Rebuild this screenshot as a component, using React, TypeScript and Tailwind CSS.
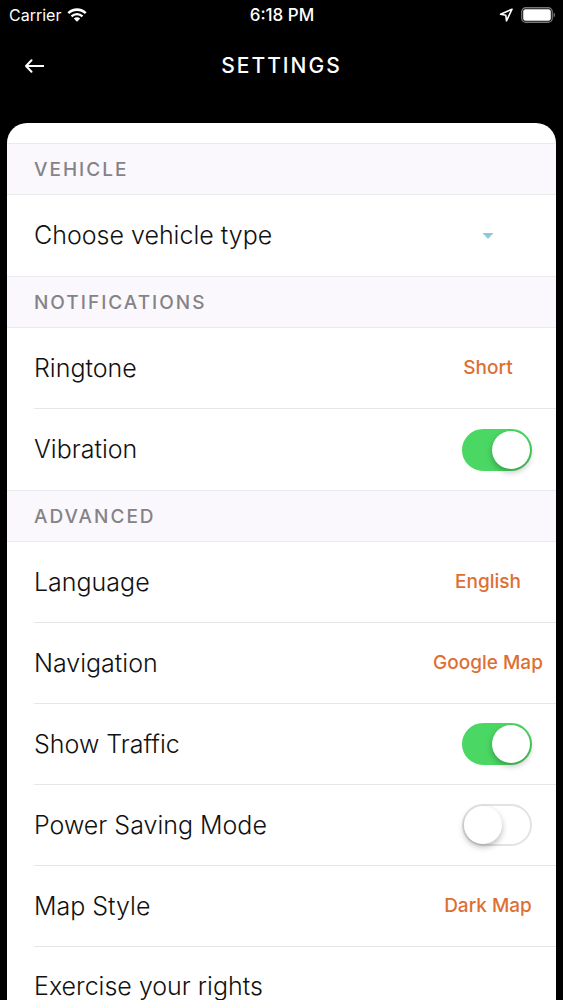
import { useState } from "react";
import type { ReactNode } from "react";

interface SectionProps {
  title: string;
  children: ReactNode;
}

interface RowProps {
  label: string;
  htmlFor?: string;
  children?: ReactNode;
}

interface PickerProps {
  id: string;
  value: string;
}

interface ToggleProps {
  id: string;
  defaultOn?: boolean;
}

function StatusBar() {
  return (
    <div className="grid h-[30px] grid-cols-3 items-center pr-2 pl-[9px] text-base leading-none">
      <div className="flex items-center gap-1.5">
        <span>Carrier</span>
        <svg width="20" height="14" viewBox="0 0 20 14" fill="none" stroke="currentColor" aria-hidden="true">
          <path d="M1.3 5.1a12.6 12.6 0 0 1 17.4 0" strokeWidth="2.6" />
          <path d="M4.5 8.3a8 8 0 0 1 11 0" strokeWidth="2.4" />
          <path d="M10 13.8 6.8 10.6a4.6 4.6 0 0 1 6.4 0z" fill="currentColor" stroke="none" />
        </svg>
      </div>
      <span className="text-center text-[17px] font-medium whitespace-nowrap">6:18 PM</span>
      <div className="flex items-center justify-end gap-2">
        <svg width="14" height="14" viewBox="0 0 14 14" fill="none" stroke="currentColor" aria-hidden="true">
          <path d="M13 1.2 1.6 6.3l5.2.9.7 5.6z" strokeWidth="1.6" strokeLinejoin="round" />
        </svg>
        <svg width="34" height="16" viewBox="0 0 34 16" aria-hidden="true">
          <rect x="0.75" y="0.75" width="30.5" height="14.5" rx="4" fill="none" stroke="#77777a" strokeWidth="1.3" />
          <rect x="2.2" y="2.2" width="27.6" height="11.6" rx="2.3" fill="#fff" />
          <path d="M32.6 5.5c.9.4 1.4 1.3 1.4 2.5s-.5 2.1-1.4 2.5z" fill="#77777a" />
        </svg>
      </div>
    </div>
  );
}

function NavBar() {
  return (
    <header className="mb-[21px] grid h-[72px] grid-cols-3 items-center px-6">
      <button type="button" aria-label="Back" className="w-5">
        <svg width="20" height="14" viewBox="0 0 20 14" fill="none" stroke="currentColor" strokeWidth="2">
          <path d="M19.5 7H2M7.5 1.2 2 7l5.5 5.8" strokeLinejoin="round" strokeLinecap="round" />
        </svg>
      </button>
      <h1 className="text-center text-[21px] font-medium tracking-[2px]">SETTINGS</h1>
    </header>
  );
}

function Section({ title, children }: SectionProps) {
  return (
    <section>
      <h2 className="flex h-[52px] items-center border-y border-[#ebe9ec] bg-[#faf8fc] px-[27px] pt-0.5 text-[19px] font-medium tracking-[2px] text-[#858387]">
        {title}
      </h2>
      <div className="ml-[27px] divide-y divide-[#e6e6e8]">{children}</div>
    </section>
  );
}

function Row({ label, htmlFor, children }: RowProps) {
  return (
    <div className="flex h-[81px] items-center justify-between">
      <label htmlFor={htmlFor} className="text-[25px] leading-none font-light text-[#111]">
        {label}
      </label>
      {children}
    </div>
  );
}

function Picker({ id, value }: PickerProps) {
  return (
    <select
      id={id}
      className="w-[136px] appearance-none bg-transparent text-center text-[19px] font-medium text-[#de6f33] outline-none"
    >
      <option>{value}</option>
    </select>
  );
}

function Toggle({ id, defaultOn = false }: ToggleProps) {
  const [on, setOn] = useState(defaultOn);

  return (
    <input
      id={id}
      type="checkbox"
      role="switch"
      checked={on}
      onChange={(e) => setOn(e.target.checked)}
      className="mr-6 flex h-[42px] w-[70px] cursor-pointer appearance-none items-center rounded-full border-2 border-[#e4e2e7] bg-white before:size-[38px] before:rounded-full before:bg-white before:shadow-[0_3px_6px_rgba(0,0,0,0.28)] checked:justify-end checked:border-[#4bd763] checked:bg-[#4bd763]"
    />
  );
}

export default function App() {
  return (
    <div className="flex h-screen flex-col bg-black font-['Inter',sans-serif] text-white">
      <StatusBar />
      <NavBar />

      <main className="mx-[7px] min-h-0 flex-1 overflow-y-auto rounded-t-[20px] bg-white pt-5 [scrollbar-width:none]">
        <Section title="VEHICLE">
          <Row label="Choose vehicle type" htmlFor="vehicle">
            <div className="relative">
              <select id="vehicle" className="h-10 w-[136px] appearance-none bg-transparent outline-none">
                <option value="" />
              </select>
              <svg
                width="12"
                height="6"
                viewBox="0 0 12 6"
                className="pointer-events-none absolute inset-0 m-auto"
                aria-hidden="true"
              >
                <path d="M.5 0h11L6 6z" fill="#8fc8dc" />
              </svg>
            </div>
          </Row>
        </Section>

        <Section title="NOTIFICATIONS">
          <Row label="Ringtone" htmlFor="ringtone">
            <Picker id="ringtone" value="Short" />
          </Row>
          <Row label="Vibration" htmlFor="vibration">
            <Toggle id="vibration" defaultOn />
          </Row>
        </Section>

        <Section title="ADVANCED">
          <Row label="Language" htmlFor="language">
            <Picker id="language" value="English" />
          </Row>
          <Row label="Navigation" htmlFor="navigation">
            <Picker id="navigation" value="Google Map" />
          </Row>
          <Row label="Show Traffic" htmlFor="traffic">
            <Toggle id="traffic" defaultOn />
          </Row>
          <Row label="Power Saving Mode" htmlFor="power">
            <Toggle id="power" />
          </Row>
          <Row label="Map Style" htmlFor="map-style">
            <Picker id="map-style" value="Dark Map" />
          </Row>
          <a href="#rights" className="flex h-[78px] items-center text-[25px] leading-none font-light text-[#111]">
            Exercise your rights
          </a>
        </Section>
      </main>
    </div>
  );
}
